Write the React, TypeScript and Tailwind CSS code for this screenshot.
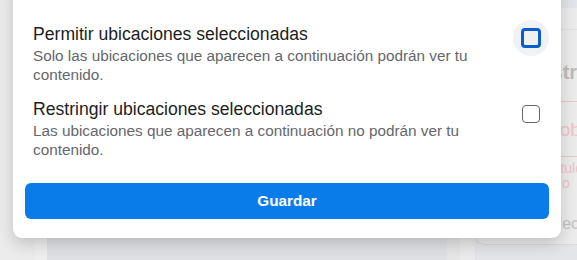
import { useState } from 'react';

type Option = {
  id: string;
  title: string;
  description: string;
};

const options: Option[] = [
  {
    id: 'allow',
    title: 'Permitir ubicaciones seleccionadas',
    description: 'Solo las ubicaciones que aparecen a continuación podrán ver tu contenido.',
  },
  {
    id: 'restrict',
    title: 'Restringir ubicaciones seleccionadas',
    description: 'Las ubicaciones que aparecen a continuación no podrán ver tu contenido.',
  },
];

function Checkbox({ checked, focused }: { checked: boolean; focused?: boolean }) {
  if (focused) {
    return (
      <div className="flex h-9 w-9 items-center justify-center rounded-full bg-[#f0f2f5]">
        <div
          className={`h-[20px] w-[20px] rounded-[4px] border-[3px] border-[#0a5dcb] ${
            checked ? 'bg-[#0a7cea]' : 'bg-[#f0f0f0]'
          }`}
        />
      </div>
    );
  }
  return (
    <div className="flex h-9 w-9 items-center justify-center">
      <div
        className={`h-[18px] w-[18px] rounded-[4px] border-[1.5px] border-[#65676b] ${
          checked ? 'bg-[#0a7cea]' : 'bg-white'
        }`}
      />
    </div>
  );
}

export default function App() {
  const [selected, setSelected] = useState<string | null>(null);

  return (
    <div className="relative h-[260px] w-[577px] overflow-hidden bg-[#e4e5e8] font-['Liberation_Sans',sans-serif]">
      {/* page behind the dialog */}
      <div className="flex h-full">
        <div className="w-[35px] shrink-0 bg-[#ececec]" />
        <div className="w-[12px] shrink-0 bg-[#efefef]" />
        <div className="w-[400px] shrink-0 bg-[#dfe1e4]" />
        <div className="w-[13px] shrink-0 bg-[#e6e6e7]" />
        <div className="w-[15px] shrink-0 bg-[#ebebeb]" />
        <div className="min-w-0 flex-1 overflow-hidden bg-[#e3e5e8] pt-[8px]">
          <div className="h-[237px] overflow-hidden rounded-bl-[10px] border-b border-l border-[#dcdcdc] bg-[#ececec] pt-[21px]">
            <div className="border-b border-[#e2e2e2]" />
            <div className="mt-[27px] whitespace-nowrap pl-[50px] text-[20px] font-bold text-[#bdbdbd]">Restringir</div>
            <div className="mt-[14px] border-t border-[#edc4c9]" />
            <div className="mt-[14px] whitespace-nowrap pl-[71px] text-[19px] text-[#f0c4c9]">Sobre</div>
            <div className="mt-[11px] border-t border-[#edc4c9]" />
            <div className="mt-[4px] whitespace-nowrap pl-[72px] text-[14px] leading-[15px] text-[#f0c4c9]">
              Título
              <br />
              <span className="pl-[14px]">o</span>
            </div>
            <div className="mt-[21px] whitespace-nowrap pl-[63px] text-[16px] text-[#c4c4c4]">Seleccione</div>
          </div>
        </div>
      </div>

      {/* dialog */}
      <div className="absolute left-[13px] top-[-20px] w-[548px] rounded-b-[9px] bg-white pb-[19px] shadow-[0_6px_16px_rgba(0,0,0,0.18)]">
        <div className="flex flex-col gap-[14px] pl-[20px] pr-[12px] pt-[43px]">
          {options.map((o, i) => (
            <button
              key={o.id}
              onClick={() => setSelected(o.id)}
              className="flex items-start justify-between text-left"
            >
              <div className="pr-[40px]">
                <div className="text-[17.6px] leading-[23px] text-[#1c1e21]">{o.title}</div>
                <div className="text-[15.3px] leading-[19px] text-[#65676b]">{o.description}</div>
              </div>
              <div className={i === 0 ? '-mt-[3px] shrink-0' : '-mt-[2px] shrink-0'}>
                <Checkbox checked={selected === o.id} focused={i === 0} />
              </div>
            </button>
          ))}
        </div>
        <div className="px-[12px] pt-[24px]">
          <button className="h-[36px] w-full rounded-[6px] bg-[#0a7cea] text-[15.3px] font-bold text-white">
            Guardar
          </button>
        </div>
      </div>
    </div>
  );
}
